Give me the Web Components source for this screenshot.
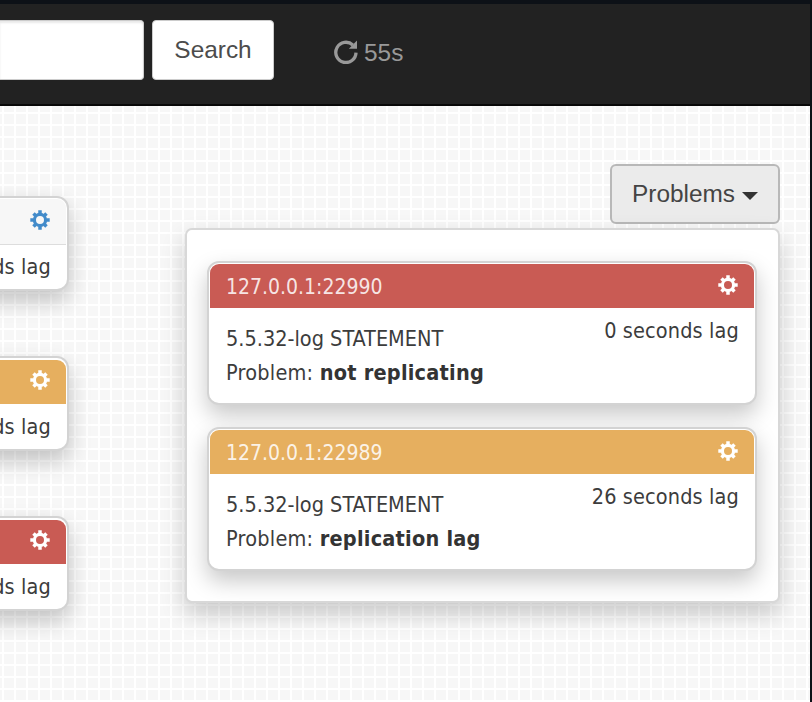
<!DOCTYPE html>
<html lang="en">
<head>
<meta charset="utf-8">
<title>Cluster</title>
<style>
html,body{margin:0;height:100%;overflow:hidden;background:#0d1117}
</style>
</head>
<body>
<cluster-page></cluster-page>
<script>
const define = (name, html) => {
  const t = document.createElement('template');
  t.innerHTML = html;
  customElements.define(name, class extends HTMLElement {
    constructor() {
      super();
      this.attachShadow({mode: 'open'}).append(t.content.cloneNode(true));
    }
  });
};

define('gear-icon', `
<style>
:host{display:block;width:20px;height:20px}
svg{display:block}
</style>
<svg width="20" height="20" viewBox="-10 -10 20 20" fill="none" stroke="currentColor">
  <circle r="5.6" stroke-width="3.2"/>
  <g stroke-width="3.5">
    <path d="M0-6.3V-9.7M0 6.3V9.7M-6.3 0H-9.7M6.3 0H9.7"/>
    <path transform="rotate(45)" d="M0-6.3V-9.2M0 6.3V9.2M-6.3 0H-9.2M6.3 0H9.2"/>
  </g>
</svg>`);

define('refresh-icon', `
<style>
:host{display:block;width:24px;height:24px}
svg{display:block}
</style>
<svg width="24" height="24" viewBox="0 0 24 24">
  <path d="M18.8 5A10.1 10.1 0 1 0 22 12.6" fill="none" stroke="currentColor" stroke-width="3.3"/>
  <path d="M23 0.6V8.8H14.8Z" fill="currentColor"/>
</svg>`);

define('nav-bar', `
<style>
:host{display:flex;box-sizing:border-box;height:102px;padding:16px 0 0;background:#222;border-bottom:2px solid #080808;font:24.4px/28px "Liberation Sans",Arial,sans-serif;color:#999}
.field{box-sizing:border-box;width:144px;height:60px;background:#fff;border:1px solid #ccc;border-left:0;border-radius:0 4px 4px 0;box-shadow:inset 0 2px 2px rgba(0,0,0,.09)}
.btn{box-sizing:border-box;width:122px;height:60px;margin-left:8px;padding-top:15px;background:#fff;border:1px solid #ccc;border-radius:4px;color:#4c4c4c;text-align:center}
.timer{display:flex;margin:19px 0 0 60px;height:28px}
.timer span{margin-left:6px}
refresh-icon{margin-top:1px}
</style>
<div class="field"></div>
<div class="btn">Search</div>
<div class="timer"><refresh-icon></refresh-icon><span><slot></slot></span></div>`);

define('instance-card', `
<style>
:host{--tone:#f7f7f7;display:flex;flex-direction:column;box-sizing:border-box;width:550px;height:144px;padding:1px;background:#fff;border:2px solid #d3d3d3;border-radius:12px;box-shadow:0 10px 22px rgba(0,0,0,.22);color:#3c3c3c;font:21.5px/34px "DejaVu Sans Condensed","DejaVu Sans",sans-serif;font-stretch:semi-condensed;flex:none}
:host([small]){height:95px;width:300px}
:host([tone=red]){--tone:#c95b54}
:host([tone=orange]){--tone:#e6af5f}
header{box-sizing:border-box;display:flex;justify-content:space-between;height:44px;padding:6px 16px 0 16px;background:var(--tone);border-radius:9px 9px 0 0;color:rgba(255,255,255,.86);font-size:21px}
:host([small][tone]) header{margin-top:1px;padding-top:5px}
:host(:not([tone])) header{height:46px;border-bottom:1px solid #ddd}
gear-icon{margin-top:5px;color:#fff;width:20px}
:host(:not([tone])) gear-icon{color:#428bca}
.body{display:flex;justify-content:space-between;padding:14px 15px 0 16px;white-space:nowrap}
.lag{margin-top:-8px;height:34px;letter-spacing:.13px}
:host([small]:not([tone])) .lag{margin-top:-9px}
</style>
<header><slot name="host"><span></span></slot><gear-icon></gear-icon></header>
<div class="body"><div><slot></slot></div><div class="lag"><slot name="lag"></slot></div></div>`);

define('problems-button', `
<style>
:host{box-sizing:border-box;display:flex;align-items:center;justify-content:center;gap:7px;width:170px;height:60px;background:#ebebeb;border:2px solid #b8b8b8;border-radius:6px;color:#444;font:24.4px/28px "Liberation Sans",Arial,sans-serif}
i{margin-top:4px;border:8px solid transparent;border-top-color:#333;border-bottom:0}
</style>
<span><slot></slot></span><i></i>`);

define('problems-panel', `
<style>
:host{box-sizing:border-box;display:flex;flex-direction:column;gap:22px;width:595px;height:375px;padding:31px 20px 0;background:#fff;border:2px solid #d8d8d8;border-radius:7px;box-shadow:0 11px 24px rgba(0,0,0,.2)}
</style>
<slot></slot>`);

define('cluster-page', `
<style>
:host{display:block;box-sizing:border-box;width:812px;height:702px;padding:4px 2px 0 0;background:#0d1117;overflow:hidden}
main{display:flex;justify-content:space-between;height:596px;background-color:#f7f7f7;background-image:linear-gradient(#fff 2px,transparent 2px),linear-gradient(90deg,#fff 2px,transparent 2px);background-size:12px 12px;background-position:2px 6px}
.left{display:flex;flex-direction:column;align-items:flex-end;gap:65px;width:69px;padding-top:90px}
.right{display:flex;flex-direction:column;align-items:flex-end;gap:4px;padding:58px 30px 0 0}
.problem{letter-spacing:.23px}
b{font-weight:700;color:#333}
</style>
<nav-bar>55s</nav-bar>
<main>
  <div class="left">
    <instance-card small><span slot="lag">ds lag</span></instance-card>
    <instance-card small tone="orange"><span slot="lag">ds lag</span></instance-card>
    <instance-card small tone="red"><span slot="lag">ds lag</span></instance-card>
  </div>
  <div class="right">
    <problems-button>Problems</problems-button>
    <problems-panel>
      <instance-card tone="red"><span slot="host">127.0.0.1:22990</span><span slot="lag">0 seconds lag</span><div>5.5.32-log STATEMENT</div><div class="problem">Problem: <b>not replicating</b></div></instance-card>
      <instance-card tone="orange"><span slot="host">127.0.0.1:22989</span><span slot="lag">26 seconds lag</span><div>5.5.32-log STATEMENT</div><div class="problem">Problem: <b>replication lag</b></div></instance-card>
    </problems-panel>
  </div>
</main>`);
</script>
</body>
</html>
